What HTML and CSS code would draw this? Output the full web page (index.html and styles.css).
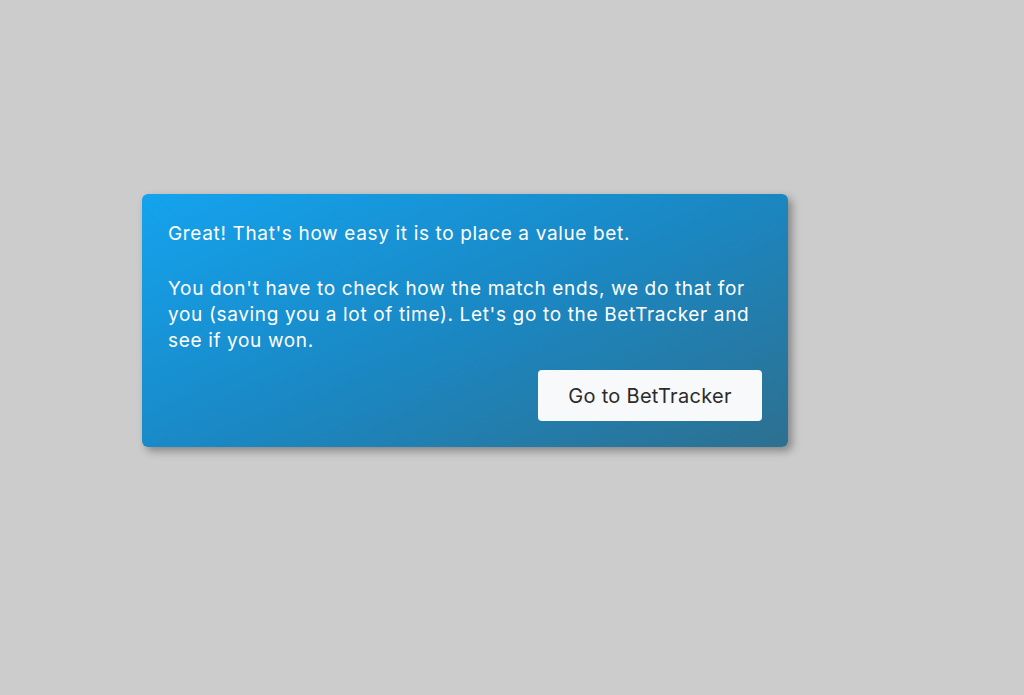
FILE: index.html
```html
<!DOCTYPE html>
<html lang="en">
<head>
  <meta charset="UTF-8">
  <meta name="viewport" content="width=device-width, initial-scale=1.0">
  <title>Value bet placed</title>
  <link rel="stylesheet" href="styles.css">
</head>
<body>
  <div class="tour-card">
    <p>Great! That's how easy it is to place a value bet.</p>
    <p>You don't have to check how the match ends, we do that for you (saving you a lot of time). Let's go to the BetTracker and see if you won.</p>
    <div class="actions">
      <button class="tour-btn">Go to BetTracker</button>
    </div>
  </div>
</body>
</html>
```

FILE: styles.css
```css
body {
  margin: 0;
  height: 695px;
  background-color: #cccccc;
  font-family: Inter, "Noto Sans", sans-serif;
}

.tour-card {
  position: relative;
  top: 194px;
  left: 142px;
  width: 594px;
  padding: 27px 26px 26px;
  border-radius: 6px;
  background: linear-gradient(155deg, #14a3ee 0%, #1a88c4 50%, #2d7090 100%);
  box-shadow: 4px 4px 8px rgba(0, 0, 0, 0.35);
  color: #ffffff;
}

.tour-card p {
  margin: 0 0 29px;
  font-size: 19px;
  line-height: 26px;
  letter-spacing: 0.65px;
}

.tour-card p:nth-of-type(2) {
  margin-bottom: 16px;
}

.actions {
  display: flex;
  justify-content: flex-end;
}

.tour-btn {
  width: 224px;
  height: 51px;
  border: none;
  border-radius: 4px;
  background-color: #f7f9fb;
  color: #2b2b2b;
  font-family: inherit;
  font-size: 20px;
  letter-spacing: 0.3px;
  cursor: pointer;
}
```
